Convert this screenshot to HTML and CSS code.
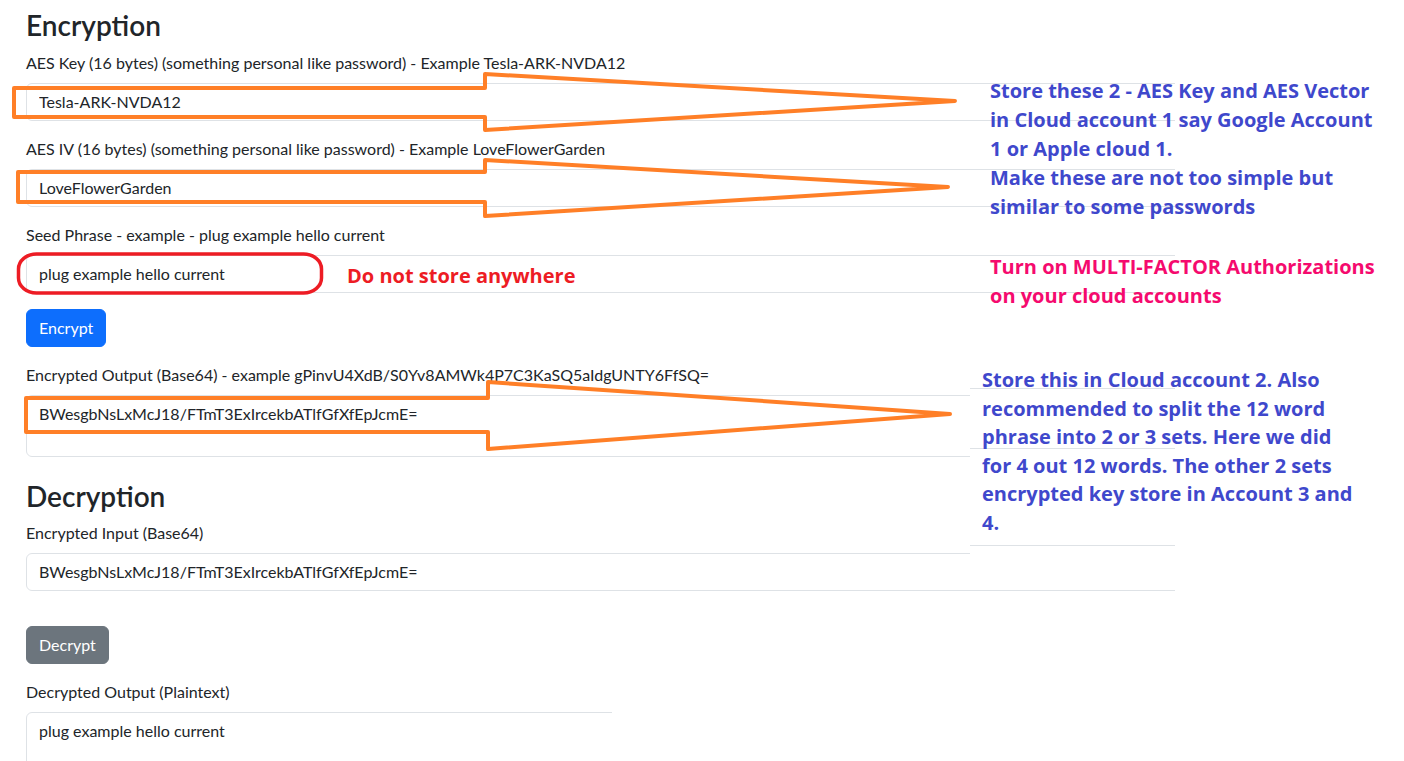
FILE: index.html
```html
<!DOCTYPE html>
<html lang="en">
<head>
<meta charset="utf-8">
<title>Encryption</title>
<link rel="stylesheet" href="styles.css">
</head>
<body>
<main class="page">
  <section class="section">
    <h3 class="title">Encryption</h3>
    <div class="field">
      <label class="label">AES Key (16 bytes) (something personal like password) - Example Tesla-ARK-NVDA12</label>
      <div class="clip"><input class="control" type="text" value="Tesla-ARK-NVDA12"></div>
    </div>
    <div class="field">
      <label class="label">AES IV (16 bytes) (something personal like password) - Example LoveFlowerGarden</label>
      <div class="clip"><input class="control" type="text" value="LoveFlowerGarden"></div>
    </div>
    <div class="field">
      <label class="label">Seed Phrase - example - plug example hello current</label>
      <div class="clip"><input class="control" type="text" value="plug example hello current"></div>
    </div>
    <div class="field">
      <button class="btn btn-primary" type="button">Encrypt</button>
    </div>
    <div class="field">
      <label class="label">Encrypted Output (Base64) - example gPinvU4XdB/S0Yv8AMWk4P7C3KaSQ5aIdgUNTY6FfSQ=</label>
      <div class="clip"><textarea class="control" rows="2">BWesgbNsLxMcJ18/FTmT3ExIrcekbATlfGfXfEpJcmE=</textarea></div>
    </div>
  </section>

  <section class="section section-dec">
    <h3 class="title">Decryption</h3>
    <div class="field">
      <label class="label">Encrypted Input (Base64)</label>
      <div class="clip"><input class="control" type="text" value="BWesgbNsLxMcJ18/FTmT3ExIrcekbATlfGfXfEpJcmE="></div>
    </div>
    <div class="field field-btn">
      <button class="btn btn-secondary" type="button">Decrypt</button>
    </div>
    <div class="field">
      <label class="label">Decrypted Output (Plaintext)</label>
      <div class="clip clip-short"><textarea class="control" rows="2">plug example hello current</textarea></div>
    </div>
  </section>

  <svg class="marks" width="1404" height="761" viewBox="0 0 1404 761" aria-hidden="true">
    <g class="arrow">
      <polygon points="14,88 485,88 485,74 955,101 485,130 485,117 14,117"/>
      <polygon points="18,172 485,172 485,160 948,187 485,216 485,202 18,202"/>
      <polygon points="26,398 488,398 488,382 950,414 488,449 488,432 26,432"/>
    </g>
    <rect class="ring" x="18.5" y="254" width="303" height="39" rx="18" ry="15"/>
  </svg>

  <div class="note note-keys">Store these 2 - AES Key and AES Vector<br>in Cloud account 1 say Google Account<br>1 or Apple cloud 1.<br>Make these are not too simple but<br>similar to some passwords</div>
  <div class="note note-mfa">Turn on MULTI-FACTOR Authorizations<br>on your cloud accounts</div>
  <div class="note note-seed">Do not store anywhere</div>
  <div class="note note-output">Store this in Cloud account 2. Also<br>recommended to split the 12 word<br>phrase into 2 or 3 sets. Here we did<br>for 4 out 12 words. The other 2 sets<br>encrypted key store in Account 3 and<br>4.</div>
</main>
</body>
</html>
```
FILE: styles.css
```css
html, body {
  margin: 0;
  background: #fff;
}
body {
  font-family: "Lato", "Liberation Sans", sans-serif;
  font-size: 16px;
  line-height: 1.5;
  color: #212529;
  overflow: hidden;
}
.page {
  position: relative;
  width: 1404px;
  height: 761px;
  overflow: hidden;
  box-sizing: border-box;
  padding: 9px 0 0 26px;
}
.section {
  width: 1149px;
}
.section-dec {
  margin-top: 23px;
}
.title {
  margin: 0 0 8px;
  font-size: 28px;
  line-height: 1.2;
  font-weight: 600;
  color: #212529;
}
.field {
  margin-bottom: 16px;
}
.field-btn {
  margin-top: 35px;
}
.label {
  display: block;
  margin-bottom: 8px;
}
.clip {
  overflow: hidden;
}
.clip-short {
  width: 586px;
}
.control {
  display: block;
  box-sizing: border-box;
  width: calc(100% + 8px);
  margin: 0;
  padding: 6px 12px;
  font: inherit;
  line-height: 1.5;
  color: #212529;
  background: #fff;
  border: 1px solid #dee2e6;
  border-radius: 6px;
  outline: none;
}
textarea.control {
  resize: none;
  overflow: hidden;
}
.btn {
  display: inline-block;
  padding: 6px 12px;
  font: inherit;
  line-height: 1.5;
  color: #fff;
  border: 1px solid transparent;
  border-radius: 6px;
  cursor: pointer;
}
.btn-primary {
  background: #0d6efd;
  border-color: #0d6efd;
}
.btn-secondary {
  background: #6c757d;
  border-color: #6c757d;
}
.marks {
  position: absolute;
  left: 0;
  top: 0;
  pointer-events: none;
}
.arrow polygon {
  fill: none;
  stroke: #ff7f27;
  stroke-width: 4;
  stroke-linejoin: round;
}
.ring {
  fill: none;
  stroke: #ed1c24;
  stroke-width: 3.5;
}
.note {
  position: absolute;
  font-family: "Open Sans", "Noto Sans", sans-serif;
  font-weight: 700;
  font-size: 20px;
  line-height: 29px;
  color: #3f48cc;
  white-space: nowrap;
}
.note-keys {
  left: 990px;
  top: 76px;
}
.note-mfa {
  left: 990px;
  top: 252px;
  color: #f50a6e;
}
.note-seed {
  left: 347px;
  top: 261px;
  color: #ed1c24;
}
.note-output {
  left: 970px;
  top: 360px;
  width: 434px;
  height: 194px;
  box-sizing: border-box;
  padding: 6px 0 0 12px;
  line-height: 28.6px;
  background:
    linear-gradient(#dee2e6, #dee2e6) 0 28px / 205px 1px no-repeat,
    linear-gradient(#dee2e6, #dee2e6) 0 88px / 205px 1px no-repeat,
    linear-gradient(#dee2e6, #dee2e6) 0 185px / 205px 1px no-repeat,
    #fff;
}
```
